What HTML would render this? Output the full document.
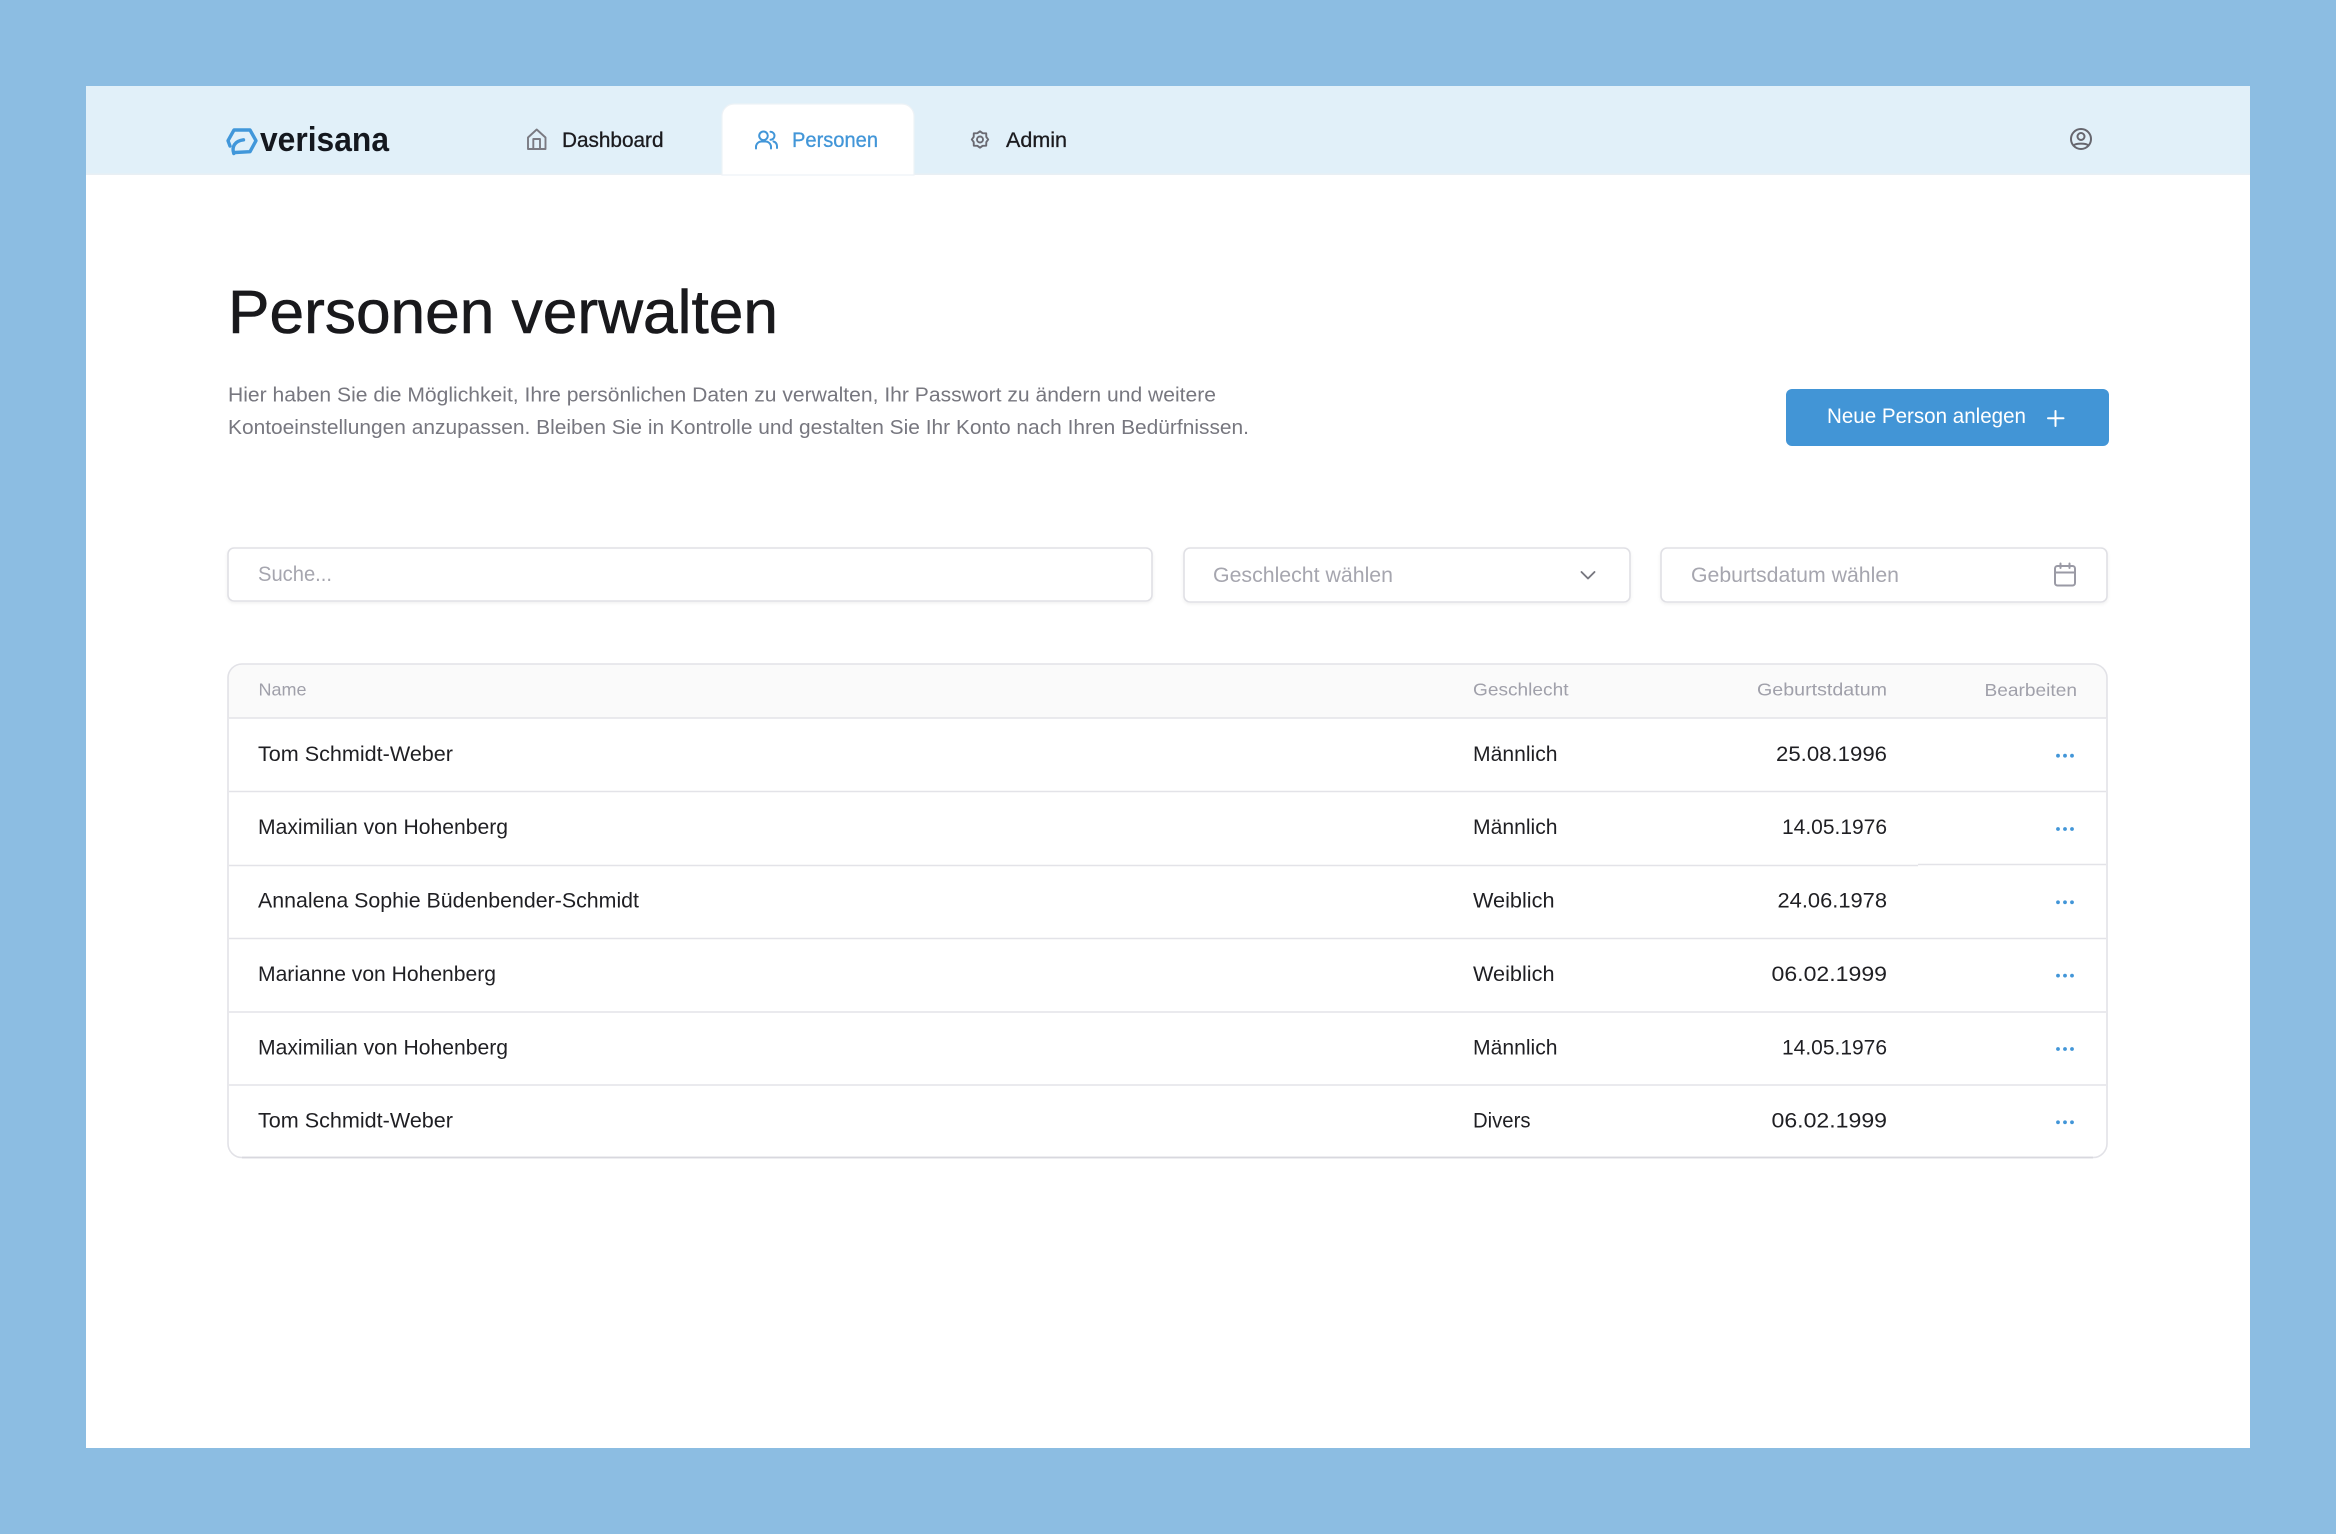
<!DOCTYPE html>
<html lang="de">
<head>
<meta charset="utf-8">
<title>Personen verwalten</title>
<style>
html,body{margin:0;padding:0;width:2336px;height:1534px;overflow:hidden;background:#8cbde2}
svg{display:block}
text{font-family:"Liberation Sans",sans-serif;fill:#1b1b1f}
.soft{filter:blur(.35px)}
.th{font-size:17.5px;fill:#a0a0aa}
.td{font-size:21px;fill:#1f1f23}
.ph{font-size:21px;fill:#a6a6af}
.p{font-size:20px;fill:#77777f}
.nav{font-size:21px;stroke:#1b1b1f;stroke-width:.3px}
.ic{fill:none;stroke-linecap:round;stroke-linejoin:round}
.ln{stroke:#e3e3e8;stroke-width:1.6}
</style>
</head>
<body>
<svg width="2336" height="1534" viewBox="0 0 2336 1534" xmlns="http://www.w3.org/2000/svg">
<defs>
<filter id="sh" x="-5%" y="-30%" width="110%" height="170%"><feDropShadow dx="0" dy="1.5" stdDeviation="1.5" flood-color="#000" flood-opacity=".06"/></filter>
</defs>

<rect x="86" y="86" width="2164" height="1362" fill="#fff"/>
<rect x="86" y="86" width="2164" height="89" fill="#e1f0f9"/>
<rect x="86" y="173.500" width="2164" height="1.500" fill="#e9eff4"/>

<path d="M722 175V116a12 12 0 0 1 12-12h168a12 12 0 0 1 12 12v59z" fill="#fff" stroke="#edf2f6" stroke-width="1.200"/>

<g class="soft">
<!-- logo -->
<g class="ic" stroke="#4197da" stroke-width="3.400">
<path d="M230 146 228 140.700 234 130H250L256 140.700 250 151.700 235 152.500"/>
<path d="M233.800 153.500C231.500 147 234.500 141 243.500 139.800"/>
</g>
<text x="260" y="151" font-size="34" font-weight="700" textLength="129" lengthAdjust="spacingAndGlyphs" style="fill:#14181f">verisana</text>

<!-- nav -->
<g class="ic" stroke="#7a7a82" stroke-width="1.900">
<path d="M528 137.500 536.700 129.500 545.500 137.500V149H528Z"/>
<path d="M533.300 149V139H540V149"/>
</g>
<text class="nav" x="562" y="147" textLength="101.500" lengthAdjust="spacingAndGlyphs">Dashboard</text>

<g class="ic" stroke="#4296d8" stroke-width="2">
<circle cx="763.500" cy="135.800" r="4.300"/>
<path d="M756 148.500V146.500a5.500 5.500 0 0 1 5.500-5h4a5.500 5.500 0 0 1 5.500 5V148.500"/>
<path d="M770.500 131.800a4 4 0 0 1 0 8"/>
<path d="M773.500 141.500a5 5 0 0 1 3.500 4.500V148"/>
</g>
<text class="nav" x="792" y="147" textLength="86" lengthAdjust="spacingAndGlyphs" style="fill:#4296d8;stroke:#4296d8">Personen</text>

<g class="ic" stroke="#6a6a72" stroke-width="1.900">
<path d="M988.200 139.500 986.300 142.100 986.200 145.700 982.600 145.800 980 147.700 977.400 145.800 973.800 145.700 973.700 142.100 971.800 139.500 973.700 136.900 973.800 133.300 977.400 133.200 980 131.300 982.600 133.200 986.200 133.300 986.300 136.900Z"/>
<circle cx="980" cy="139.500" r="3"/>
</g>
<text class="nav" x="1006" y="147" textLength="61" lengthAdjust="spacingAndGlyphs">Admin</text>

<g class="ic" stroke="#66666e" stroke-width="2">
<circle cx="2081" cy="139" r="10"/>
<circle cx="2081" cy="136.500" r="3.500"/>
<path d="M2073.500 145.500C2076 143 2086 143 2088.500 145.500"/>
</g>

<!-- heading -->
<text x="228" y="333" font-size="61" textLength="550" lengthAdjust="spacingAndGlyphs" style="fill:#19191c;stroke:#19191c;stroke-width:.6px">Personen verwalten</text>
<text class="p" x="228" y="401.500" textLength="988" lengthAdjust="spacingAndGlyphs">Hier haben Sie die Möglichkeit, Ihre persönlichen Daten zu verwalten, Ihr Passwort zu ändern und weitere</text>
<text class="p" x="228" y="434" textLength="1021" lengthAdjust="spacingAndGlyphs">Kontoeinstellungen anzupassen. Bleiben Sie in Kontrolle und gestalten Sie Ihr Konto nach Ihren Bedürfnissen.</text>

<!-- button -->
<rect x="1786" y="389" width="323" height="57" rx="6" fill="#4295d6"/>
<text x="1827" y="423" font-size="21" textLength="199" lengthAdjust="spacingAndGlyphs" style="fill:#fff">Neue Person anlegen</text>
<path class="ic" d="M2055.500 411V426M2048 418.200H2063.500" stroke="#fff" stroke-width="2"/>

<!-- filters -->
<rect x="228" y="548" width="924" height="53" rx="6" fill="#fff" stroke="#e0e0e5" stroke-width="1.600" filter="url(#sh)"/>
<text class="ph" x="258" y="581" textLength="74" lengthAdjust="spacingAndGlyphs">Suche...</text>

<rect x="1184" y="548" width="446" height="54" rx="6" fill="#fff" stroke="#e0e0e5" stroke-width="1.600" filter="url(#sh)"/>
<text class="ph" x="1213" y="582" textLength="180" lengthAdjust="spacingAndGlyphs">Geschlecht wählen</text>
<path class="ic" d="M1581.500 572 1588 578.500 1594.500 572" stroke="#77777f" stroke-width="1.900"/>

<rect x="1661" y="548" width="446" height="54" rx="6" fill="#fff" stroke="#e0e0e5" stroke-width="1.600" filter="url(#sh)"/>
<text class="ph" x="1691" y="582" textLength="208" lengthAdjust="spacingAndGlyphs">Geburtsdatum wählen</text>
<g class="ic" stroke="#9a9aa5" stroke-width="2">
<rect x="2055" y="566" width="20" height="19.500" rx="2.500"/>
<path d="M2055 572.500H2075M2060.500 563.500V568M2069.500 563.500V568"/>
</g>

<!-- table -->
<rect x="228" y="664" width="1879" height="493.500" rx="14" fill="#fff"/>
<path d="M228 718V678a14 14 0 0 1 14-14H2093a14 14 0 0 1 14 14V718Z" fill="#fafafa"/>
<rect x="228" y="664" width="1879" height="493.500" rx="14" fill="none" stroke="#e2e2e7" stroke-width="1.600"/>
<path class="ln" d="M229 718H2106M229 791.500H2106M229 865.500H1918M1918 864.500H2106M229 938.500H2106M229 1012H2106M229 1085H2106"/>
<path d="M242 1157.500H2093" stroke="#d8d8de" stroke-width="1.800"/>

<text class="th" x="258.500" y="695.500" textLength="48" lengthAdjust="spacingAndGlyphs">Name</text>
<text class="th" x="1473" y="695.500" textLength="95.500" lengthAdjust="spacingAndGlyphs">Geschlecht</text>
<text class="th" x="1757" y="695.500" textLength="130" lengthAdjust="spacingAndGlyphs">Geburtstdatum</text>
<text class="th" x="1984.500" y="696" textLength="92.500" lengthAdjust="spacingAndGlyphs">Bearbeiten</text>

<text class="td" x="258" y="761" textLength="195" lengthAdjust="spacingAndGlyphs">Tom Schmidt-Weber</text>
<text class="td" x="1473" y="761" textLength="84.500" lengthAdjust="spacingAndGlyphs">Männlich</text>
<text class="td" x="1776" y="761" textLength="111" lengthAdjust="spacingAndGlyphs">25.08.1996</text>

<text class="td" x="258" y="834" textLength="250" lengthAdjust="spacingAndGlyphs">Maximilian von Hohenberg</text>
<text class="td" x="1473" y="834" textLength="84.500" lengthAdjust="spacingAndGlyphs">Männlich</text>
<text class="td" x="1782" y="834" textLength="105" lengthAdjust="spacingAndGlyphs">14.05.1976</text>

<text class="td" x="258" y="907.500" textLength="381" lengthAdjust="spacingAndGlyphs">Annalena Sophie Büdenbender-Schmidt</text>
<text class="td" x="1473" y="907.500" textLength="81.500" lengthAdjust="spacingAndGlyphs">Weiblich</text>
<text class="td" x="1777.500" y="907.500" textLength="109.500" lengthAdjust="spacingAndGlyphs">24.06.1978</text>

<text class="td" x="258" y="981" textLength="238" lengthAdjust="spacingAndGlyphs">Marianne von Hohenberg</text>
<text class="td" x="1473" y="981" textLength="81.500" lengthAdjust="spacingAndGlyphs">Weiblich</text>
<text class="td" x="1771.500" y="981" textLength="115.500" lengthAdjust="spacingAndGlyphs">06.02.1999</text>

<text class="td" x="258" y="1054.500" textLength="250" lengthAdjust="spacingAndGlyphs">Maximilian von Hohenberg</text>
<text class="td" x="1473" y="1054.500" textLength="84.500" lengthAdjust="spacingAndGlyphs">Männlich</text>
<text class="td" x="1782" y="1054.500" textLength="105" lengthAdjust="spacingAndGlyphs">14.05.1976</text>

<text class="td" x="258" y="1127.500" textLength="195" lengthAdjust="spacingAndGlyphs">Tom Schmidt-Weber</text>
<text class="td" x="1473" y="1127.500" textLength="57.500" lengthAdjust="spacingAndGlyphs">Divers</text>
<text class="td" x="1771.500" y="1127.500" textLength="115.500" lengthAdjust="spacingAndGlyphs">06.02.1999</text>

<g fill="#4296d8">
<circle cx="2058" cy="755.700" r="1.900"/><circle cx="2065" cy="755.700" r="1.900"/><circle cx="2072" cy="755.700" r="1.900"/>
<circle cx="2058" cy="829" r="1.900"/><circle cx="2065" cy="829" r="1.900"/><circle cx="2072" cy="829" r="1.900"/>
<circle cx="2058" cy="902.300" r="1.900"/><circle cx="2065" cy="902.300" r="1.900"/><circle cx="2072" cy="902.300" r="1.900"/>
<circle cx="2058" cy="975.600" r="1.900"/><circle cx="2065" cy="975.600" r="1.900"/><circle cx="2072" cy="975.600" r="1.900"/>
<circle cx="2058" cy="1049" r="1.900"/><circle cx="2065" cy="1049" r="1.900"/><circle cx="2072" cy="1049" r="1.900"/>
<circle cx="2058" cy="1122.300" r="1.900"/><circle cx="2065" cy="1122.300" r="1.900"/><circle cx="2072" cy="1122.300" r="1.900"/>
</g>
</g>
</svg>
</body>
</html>
